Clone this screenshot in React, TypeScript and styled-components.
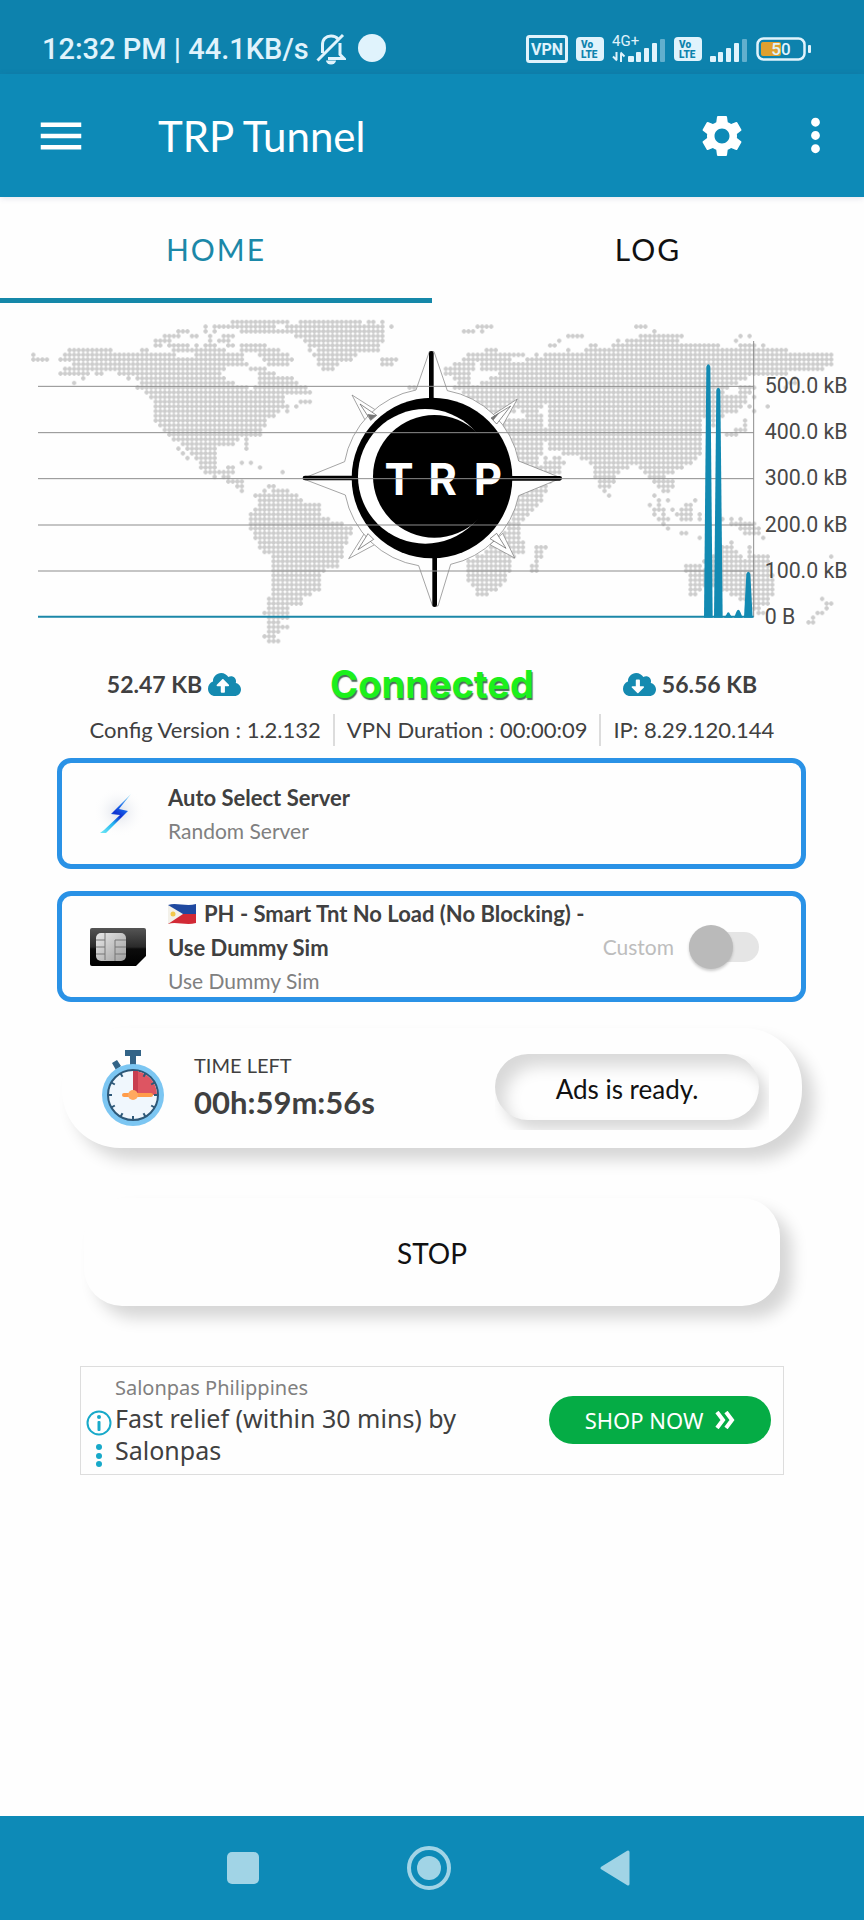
import React, { useState } from "react";
import styled, { createGlobalStyle } from "styled-components";
import { MdMenu, MdMoreVert, MdSettings } from "react-icons/md";
import { FaCloudDownloadAlt, FaCloudUploadAlt } from "react-icons/fa";

const BRAND = "#0d8ab7";
const INK = "#404040";

const GlobalStyle = createGlobalStyle`
  * { box-sizing: border-box; }
  body {
    margin: 0;
    background: #fefefe;
    color: ${INK};
    font-family: Lato, "Open Sans", sans-serif;
  }
  button { font: inherit; color: inherit; border: 0; background: none; padding: 0; margin: 0; cursor: pointer; }
  svg { display: block; flex: none; }
`;

const Screen = styled.div`
  min-height: 100vh;
  display: flex;
  flex-direction: column;
`;

/* ---------- status bar ---------- */

const StatusBar = styled.div`
  height: 74px;
  padding: 24px 52px 0 42px;
  display: flex;
  align-items: center;
  justify-content: space-between;
  background: #0d82ad;
  color: #e0f3fc;
  font-family: Roboto, sans-serif;
`;

const StatusGroup = styled.div<{ $gap: number }>`
  display: flex;
  align-items: center;
  gap: ${(p) => p.$gap}px;
`;

const Clock = styled.span`
  font-size: 29px;
  line-height: 32px;
  font-weight: 500;
  white-space: nowrap;
`;

const BellOffIcon = () => (
  <svg width="30" height="32" viewBox="0 0 30 32" fill="none" stroke="currentColor" strokeWidth="3">
    <path d="M6.500 20V12C6.500 6 10 3 15 3c3 0 5.500 1 7 3" />
    <path d="M24 10v11.500l4 4H12" />
    <path d="M1.500 27.500 27 2" />
    <path d="M10 27.500h10a5 4 0 0 1-10 0z" fill="currentColor" stroke="none" />
  </svg>
);

const VpnIcon = () => (
  <svg width="42" height="28" viewBox="0 0 42 28">
    <rect x="1.500" y="1.500" width="39" height="25" rx="2" fill="none" stroke="currentColor" strokeWidth="3" />
    <text x="21" y="20" textAnchor="middle" fontSize="16" fontWeight="700" fill="currentColor">VPN</text>
  </svg>
);

const VolteIcon = () => (
  <svg width="28" height="24" viewBox="0 0 28 24">
    <rect width="28" height="24" rx="4" fill="currentColor" />
    <text x="5" y="11" fontSize="10" fontWeight="900" fill="#0d82ad">Vo</text>
    <text x="5" y="21" fontSize="10" fontWeight="900" fill="#0d82ad">LTE</text>
  </svg>
);

const SignalBars = () => (
  <g fill="currentColor">
    <rect x="0" y="20" width="6" height="6" rx="1" />
    <rect x="8" y="16" width="5" height="10" rx="1" />
    <rect x="16" y="12" width="5" height="14" rx="1" />
    <rect x="24" y="7" width="5" height="19" rx="1" />
    <rect x="32" y="3" width="5" height="23" rx="1" opacity="0.400" />
  </g>
);

const MobileDataIcon = () => (
  <svg width="54" height="38" viewBox="0 -4 54 38">
    <text x="0" y="12" fontSize="15" fill="currentColor">4G+</text>
    <path d="M4.500 18v8M5 26.500 1 22.500M9 28v-8M8.500 18.500l4 4" stroke="currentColor" strokeWidth="2" fill="none" />
    <g transform="translate(16 2)"><SignalBars /></g>
  </svg>
);

const SignalIcon = () => (
  <svg width="38" height="26" viewBox="0 0 38 26"><SignalBars /></svg>
);

const BatteryIcon = () => (
  <svg width="56" height="24" viewBox="0 0 56 24">
    <rect x="1.500" y="1.500" width="47" height="21" rx="6" fill="none" stroke="currentColor" strokeWidth="2.500" />
    <rect x="5" y="5" width="20" height="14" rx="2" fill="#dfa02f" />
    <rect x="52" y="8" width="3" height="8" rx="1" fill="currentColor" />
    <text x="25" y="18" textAnchor="middle" fontSize="17" fontWeight="500" fill="currentColor">50</text>
  </svg>
);

/* ---------- app bar and tabs ---------- */

const AppBar = styled.header`
  height: 123px;
  padding: 0 22px 0 34px;
  display: flex;
  align-items: center;
  background: ${BRAND};
  color: #fff;
  box-shadow: 0 1px 6px rgba(60, 60, 120, 0.150);
`;

const Title = styled.h1`
  flex: 1;
  margin: 0 0 0 70px;
  font-size: 42px;
  line-height: 48px;
  font-weight: 400;
`;

const IconButton = styled.button`
  display: flex;
  & + & { margin-left: 42px; }
`;

const Tabs = styled.div`
  display: grid;
  grid-template-columns: 1fr 1fr;
`;

const Tab = styled.button<{ $active: boolean }>`
  && {
    height: 106px;
    padding-top: 3px;
    border-bottom: 5px solid ${(p) => (p.$active ? "#1588a9" : "transparent")};
    color: ${(p) => (p.$active ? "#1b88a8" : "#111")};
    font-size: 30px;
    line-height: 36px;
    letter-spacing: 2px;
  }
`;

/* ---------- traffic chart ---------- */

const Chart = styled.svg`
  width: 100%;
  height: auto;
  margin-top: 1px;
`;

/* Each row lists start/end pairs of land, from north to south. */
const WEST: number[][] = [
  [705, 745, 758, 868, 905, 950, 972, 1085, 1105, 1125, 1149, 1149],
  [622, 622, 650, 815, 868, 950, 972, 1150, 1175, 1175],
  [540, 560, 622, 622, 650, 650, 732, 790, 812, 1150],
  [488, 535, 570, 588, 637, 637, 677, 692, 893, 1150],
  [462, 508, 637, 637, 664, 680, 915, 1150],
  [462, 480, 502, 560, 583, 583, 623, 640, 690, 705, 732, 790, 930, 1140],
  [208, 330, 420, 440, 515, 570, 583, 600, 623, 665, 732, 760, 785, 840, 930, 930, 958, 1140],
  [100, 100, 190, 520, 583, 600, 623, 630, 650, 692, 718, 730, 785, 855, 945, 1070],
  [100, 145, 180, 710, 732, 732, 798, 870, 958, 1058, 1149, 1190],
  [217, 692, 718, 745, 812, 855, 958, 1015, 1149, 1177],
  [190, 665, 758, 800, 972, 1003],
  [180, 262, 290, 303, 355, 655, 785, 815],
  [249, 249, 383, 383, 407, 665, 785, 870],
  [222, 222, 420, 705, 785, 882],
  [407, 735, 771, 910, 1230, 1245],
  [434, 750, 771, 923],
  [448, 842],
  [462, 842, 905, 935],
  [462, 842, 855, 868, 893, 893],
  [462, 828, 855, 855],
  [462, 815],
  [462, 790],
  [475, 790],
  [488, 777],
  [502, 775],
  [515, 718, 745, 745],
  [543, 692, 745, 745],
  [530, 530, 557, 640, 745, 745],
  [543, 543, 570, 640],
  [557, 557, 583, 640],
  [597, 640, 732, 732, 758, 758],
  [597, 640, 690, 705, 785, 785],
  [610, 692, 852, 852],
  [650, 650, 677, 690],
  [690, 732],
  [718, 732, 812, 826],
  [732, 732, 798, 798, 826, 868],
  [771, 895],
  [785, 908],
  [785, 950],
  [771, 950],
  [758, 962],
  [758, 990],
  [758, 1030],
  [758, 1058],
  [771, 1058],
  [771, 1045],
  [785, 1045],
  [785, 1030],
  [798, 1030],
  [826, 1030],
  [826, 1017],
  [826, 1017],
  [826, 976],
  [826, 962],
  [826, 962],
  [826, 950],
  [826, 950],
  [826, 935],
  [812, 908],
  [812, 908],
  [812, 868],
  [798, 855],
  [812, 855],
  [812, 840],
  [812, 855],
  [812, 840],
  [798, 826],
  [812, 840],
];

const EAST: number[][] = [
  [],
  [133, 178, 617, 645],
  [92, 120, 147, 147, 672, 672],
  [415, 443, 630, 755, 926, 926, 953, 953],
  [375, 375, 563, 563, 590, 740, 912, 912],
  [348, 362, 470, 485, 548, 862, 930, 965, 993, 993],
  [160, 188, 402, 402, 457, 485, 510, 1060],
  [105, 270, 308, 308, 335, 1195],
  [92, 230, 280, 1195],
  [65, 120, 147, 228, 242, 1195],
  [38, 120, 147, 1170],
  [38, 110, 210, 1060],
  [65, 110, 172, 935, 1085, 1085],
  [80, 105, 145, 912, 1075, 1090],
  [65, 890, 926, 960, 1062, 1062],
  [92, 870, 926, 955],
  [105, 945, 965, 965],
  [130, 945],
  [150, 325, 348, 925, 953, 953, 1008, 1008],
  [160, 240, 275, 320, 355, 910, 965, 965],
  [170, 225, 290, 325, 355, 870],
  [205, 325, 355, 800, 845, 845, 940, 940],
  [205, 325, 355, 800, 845, 845, 940, 940],
  [205, 800, 912, 940],
  [205, 800, 885, 910],
  [220, 805],
  [235, 325, 348, 805],
  [240, 325, 348, 805],
  [250, 325, 390, 805],
  [260, 310, 335, 335, 362, 375, 455, 790],
  [260, 310, 335, 390, 470, 780],
  [265, 380, 497, 580, 630, 750],
  [265, 375, 497, 555, 645, 715],
  [265, 360, 497, 540, 655, 700],
  [250, 350, 510, 540, 672, 725],
  [250, 345, 510, 525, 685, 725],
  [250, 338, 520, 520, 700, 712],
  [250, 325, 535, 535, 672, 672],
  [250, 325, 685, 685, 712, 712, 790, 790],
  [250, 312, 658, 658, 685, 685, 765, 780],
  [250, 300, 672, 698, 725, 725, 750, 780],
  [250, 285, 672, 672, 698, 698, 738, 780, 805, 805],
  [240, 270, 685, 712, 750, 780, 805, 805, 873, 873, 900, 900, 926, 926],
  [235, 258, 698, 698, 900, 965],
  [235, 258, 712, 712, 926, 980],
  [225, 258, 752, 765, 940, 980],
  [220, 258, 805, 805, 993, 993],
  [205, 270, 900, 900],
  [180, 270, 320, 335, 873, 900, 953, 953],
  [160, 270, 308, 325, 873, 910, 953, 953],
  [130, 245, 308, 325, 845, 920, 953, 1008, 1195, 1195],
  [105, 230, 308, 320, 820, 1008],
  [105, 230, 295, 320, 765, 805, 835, 1008],
  [105, 230, 295, 308, 765, 1008],
  [105, 217, 780, 1022],
  [105, 217, 780, 1022],
  [120, 205, 780, 1022],
  [133, 190, 780, 805, 873, 1022],
  [133, 160, 780, 790, 900, 1022],
  [926, 1008, 1168, 1168],
  [965, 1008, 1180, 1195],
  [965, 980, 1180, 1180],
  [980, 993, 1155, 1168],
  [1140, 1140],
  [1127, 1140],
];

const COLUMN = 13.6;
const ROW = 14.08;

const landPath = (rows: number[][], offset: number) =>
  rows
    .map((spans, r) => {
      let d = "";
      for (let i = 0; i < spans.length; i += 2) {
        const from = Math.round((spans[i] + offset - 100) / COLUMN);
        const to = Math.round((spans[i + 1] + offset - 100) / COLUMN);
        d += `M${(100 + (from - 0.5) * COLUMN).toFixed(1)} ${(66 + (r - 0.5) * ROW).toFixed(1)}h${((to - from + 1) * COLUMN).toFixed(1)}v${ROW}H${(100 + (from - 0.5) * COLUMN).toFixed(1)}z`;
      }
      return d;
    })
    .join("");

const WorldMap = () => (
  <g>
    <defs>
      <pattern id="dots" x={100 - COLUMN / 2} y={66 - ROW / 2} width={COLUMN} height={ROW} patternUnits="userSpaceOnUse">
        <path d={`M0 ${ROW / 2}H${COLUMN}M${COLUMN / 2} 0V${ROW}`} stroke="#dadada" strokeWidth="5" />
        <circle cx={COLUMN / 2} cy={ROW / 2} r="6" fill="#cdcdcd" />
      </pattern>
    </defs>
    <path d={landPath(WEST, 0) + landPath(EAST, 1296)} fill="url(#dots)" />
  </g>
);

const CompassLogo = () => (
  <g>
    <g fill="#fefefe" stroke="#777" strokeWidth="2" strokeLinejoin="round">
      <path d="M1056 285 1096 362 1130 332z" />
      <path d="M1552 297 1470 350 1506 380z" />
      <path d="M1046 776 1092 702 1124 734z" />
      <path d="M1544 774 1470 734 1508 700z" />
      <path d="M1248 270 1288 155H1302L1342 272A266 266 0 0 1 1556 483L1684 534 1556 587A266 266 0 0 1 1352 793L1314 918H1298L1256 797A266 266 0 0 1 1036 585L908 536 1034 485A266 266 0 0 1 1248 270z" />
    </g>
    <g fill="#fff" stroke="#555" strokeWidth="2">
      <path d="M1080 312 1112 361 1130 346z" />
      <path d="M1532 318 1473 354 1490 372z" />
      <path d="M1074 749 1104 701 1121 718z" />
      <path d="M1518 745 1470 716 1490 700z" />
    </g>
    <g fill="#777">
      <path d="M1102 342 1112 361 1130 346z" />
      <path d="M1500 337 1473 354 1480 361z" />
    </g>
    <g stroke="#000" strokeWidth="14" strokeLinecap="round">
      <path d="M1294 160V300M1304 770V914M915 534H1060M1530 535H1679" />
    </g>
    <circle cx="1296" cy="534" r="241" />
    <circle cx="1276" cy="529" r="202" fill="#fff" />
    <circle cx="1303" cy="529" r="184" />
    <g fill="#fff" fontFamily="Inter, sans-serif" fontWeight="700" fontSize="131">
      <text x="1197" y="585" textAnchor="middle">T</text>
      <text x="1328" y="585" textAnchor="middle">R</text>
      <text x="1464" y="585" textAnchor="middle">P</text>
    </g>
  </g>
);

const AXIS = [
  { label: "500.0 kB", y: 259 },
  { label: "400.0 kB", y: 398 },
  { label: "300.0 kB", y: 536 },
  { label: "200.0 kB", y: 675 },
  { label: "100.0 kB", y: 813 },
  { label: "0 B", y: 951 },
];

const PEAKS = [
  { x: 2125, y: 192 },
  { x: 2155, y: 262 },
  { x: 2185, y: 936 },
  { x: 2215, y: 928 },
  { x: 2245, y: 814 },
];

const TrafficChart = () => (
  <Chart viewBox="0 12 2592 1038" role="img" aria-label="Network traffic">
    <WorldMap />
    <CompassLogo />
    <g stroke="#8c8c8c" strokeWidth="3">
      {AXIS.slice(0, 5).map((a) => (
        <path key={a.label} d={`M114 ${a.y}H2261`} />
      ))}
      <path d="M2261 123V951" />
    </g>
    <path d="M114 950H2261" stroke="#1b87a8" strokeWidth="6" />
    <g fill="#128ab2">
      {PEAKS.map((p) => (
        <path key={p.x} d={`M${p.x - 13} 953L${p.x - 6} ${p.y + 8}Q${p.x} ${p.y - 6} ${p.x + 6} ${p.y + 8}L${p.x + 13} 953z`} />
      ))}
    </g>
    <g fill="#484848" fontFamily="Roboto, sans-serif" fontSize="64">
      {AXIS.map((a) => (
        <text key={a.label} x="2294" y={a.y + 20}>{a.label}</text>
      ))}
    </g>
  </Chart>
);

/* ---------- connection summary ---------- */

const Summary = styled.div`
  height: 62px;
  padding: 6px 45px 0;
  display: grid;
  grid-template-columns: 1fr 1fr 1fr;
  align-items: center;
  justify-items: center;
`;

const Traffic = styled.div`
  display: flex;
  align-items: center;
  gap: 6px;
  font-size: 23px;
  line-height: 30px;
  font-weight: 700;
  svg { color: #158ab0; }
`;

const Connected = styled.strong`
  font-family: Inter, sans-serif;
  font-size: 38px;
  line-height: 44px;
  font-weight: 700;
  color: #1cf01c;
  text-shadow: 1px 2px 1px #4b6a58;
`;

const Details = styled.div`
  height: 36px;
  display: flex;
  align-items: center;
  justify-content: center;
  font-size: 22px;
  line-height: 32px;
  white-space: nowrap;
  span { padding: 0 12px; }
  span + span { border-left: 2px solid #dcdcdc; }
`;

/* ---------- server cards ---------- */

const Cards = styled.div`
  padding: 10px 58px 0 57px;
  display: flex;
  flex-direction: column;
  gap: 22px;
`;

const Card = styled.section`
  min-height: 111px;
  border: 5px solid #2a92e6;
  border-radius: 14px;
  display: flex;
  align-items: center;
  padding: 0 42px 0 28px;
`;

const CardSelect = styled.button`
  flex: 1;
  display: flex;
  align-items: center;
  gap: 22px;
  text-align: left;
`;

const ServerName = styled.span`
  display: block;
  font-size: 22px;
  line-height: 34px;
  font-weight: 700;
`;

const ServerNote = styled.span`
  display: block;
  font-size: 21px;
  line-height: 32px;
  color: #808080;
`;

const Flag = styled.svg`
  && { display: inline-block; }
  width: 28px;
  height: 22px;
  margin-right: 8px;
  vertical-align: -3px;
`;

const PhilippinesFlag = () => (
  <Flag viewBox="0 0 28 22" aria-label="Philippines">
    <path d="M0 2C8-1 18 4 28 1V11H0z" fill="#1f49a0" />
    <path d="M0 11H28V20C18 23 8 18 0 21z" fill="#d22a36" />
    <path d="M0 2 15 11 0 21z" fill="#f3f1ea" />
    <circle cx="5" cy="11" r="2.500" fill="#f2c84b" />
  </Flag>
);

const BoltIcon = () => (
  <svg width="56" height="56" viewBox="0 0 56 56">
    <defs>
      <radialGradient id="halo">
        <stop offset="0" stopColor="#dde1ea" />
        <stop offset="1" stopColor="#fefefe" stopOpacity="0" />
      </radialGradient>
      <linearGradient id="bolt" gradientUnits="userSpaceOnUse" x1="12" y1="48" x2="41" y2="8">
        <stop offset="0" stopColor="#6fe8f5" />
        <stop offset="0.300" stopColor="#23b4f0" />
        <stop offset="0.500" stopColor="#1030d0" />
        <stop offset="0.650" stopColor="#1560e8" />
        <stop offset="1" stopColor="#8fe6f5" />
      </linearGradient>
    </defs>
    <ellipse cx="29" cy="26" rx="26" ry="25" fill="url(#halo)" />
    <path d="M41 8 21 28l9 1L14 44l-4 3 6 0L38 25l-9-2z" fill="url(#bolt)" />
  </svg>
);

const SimIcon = () => (
  <svg width="56" height="38" viewBox="0 0 56 38">
    <defs>
      <linearGradient id="sim" x1="0" y1="0" x2="0" y2="1">
        <stop offset="0" stopColor="#555" />
        <stop offset="0.500" stopColor="#2a2a2a" />
        <stop offset="0.550" stopColor="#0c0c0c" />
        <stop offset="1" stopColor="#000" />
      </linearGradient>
      <linearGradient id="chip" x1="0" y1="0" x2="1" y2="1">
        <stop offset="0" stopColor="#e8e8e8" />
        <stop offset="1" stopColor="#a0a0a0" />
      </linearGradient>
    </defs>
    <path d="M2 0H54a2 2 0 0 1 2 2V28L46 38H2a2 2 0 0 1-2-2V2a2 2 0 0 1 2-2z" fill="url(#sim)" />
    <rect x="6" y="5" width="30" height="28" rx="5" fill="url(#chip)" />
    <path d="M6 12h9v20M6 19h9M6 26h9M15 12V5M25 33V12h11M25 19h11M25 26h11" fill="none" stroke="#777" />
  </svg>
);

const SwitchLabel = styled.label`
  display: flex;
  align-items: center;
  gap: 15px;
  font-size: 21px;
  line-height: 30px;
  color: #bdbdbd;
`;

const Switch = styled.input`
  appearance: none;
  width: 70px;
  height: 30px;
  margin: 0;
  display: flex;
  align-items: center;
  background: #e5e5e5;
  border-radius: 15px;
  &::before {
    content: "";
    flex: none;
    width: 44px;
    height: 44px;
    border-radius: 50%;
    background: #bababa;
    box-shadow: 0 2px 3px rgba(0, 0, 0, 0.200);
  }
  &:checked::before { margin-left: auto; background: ${BRAND}; }
`;

/* ---------- time left and stop ---------- */

const TimerPanel = styled.section`
  min-height: 120px;
  margin: 26px 62px 0;
  padding: 0 33px 0 40px;
  display: flex;
  align-items: center;
  border-radius: 58px;
  background: #fefefe;
  box-shadow: 12px 12px 16px rgba(0, 0, 0, 0.160);
`;

const TimeText = styled.div`
  flex: 1;
  padding: 0 0 6px 30px;
`;

const TimeLabel = styled.div`
  font-size: 20px;
  line-height: 34px;
`;

const TimeValue = styled.div`
  font-size: 31px;
  line-height: 40px;
  font-weight: 700;
`;

const AdsSlot = styled.div`
  align-self: flex-start;
  margin-top: 26px;
  padding: 0 10px 10px 0;
  overflow: hidden;
`;

const AdsButton = styled.button`
  && {
    width: 264px;
    height: 66px;
    padding-top: 3px;
    border-radius: 33px;
    background: #fefefe;
    color: #111;
    font-size: 26px;
    line-height: 32px;
    box-shadow: 8px 10px 14px rgba(0, 0, 0, 0.150), inset 10px 12px 16px rgba(0, 0, 0, 0.150);
  }
`;

const StopButton = styled.button`
  && {
    height: 108px;
    margin: 50px 84px 0;
    padding-top: 2px;
    border-radius: 38px;
    background: #fefefe;
    color: #111;
    font-size: 28px;
    line-height: 36px;
    box-shadow: 12px 12px 16px rgba(0, 0, 0, 0.160);
  }
`;

const StopwatchIcon = () => (
  <svg width="62" height="78" viewBox="0 0 62 78">
    <path d="M23 1h16v6h-5v11h-6V7h-5zM10 14l5-3 4 6-5 4z" fill="#336487" />
    <circle cx="31" cy="46" r="31" fill="#7cc6f2" />
    <circle cx="31" cy="46" r="25" fill="#f0f7fd" stroke="#2d5878" strokeWidth="2" />
    <path d="M31 46V22a24 24 0 0 1 24 24z" fill="#dd5562" />
    <path d="M31 46V22h5v24z" fill="#c83e50" />
    <g stroke="#2d5878" strokeWidth="2">
      {[30, 60, 90, 120, 150, 180, 210, 240, 270, 300, 330].map((a) => (
        <path key={a} d="M31 21v4" transform={`rotate(${a} 31 46)`} />
      ))}
    </g>
    <rect x="20" y="44" width="31" height="4" rx="2" fill="#ff9c4a" />
    <circle cx="31" cy="46" r="5" fill="#ffa95f" />
  </svg>
);

/* ---------- advert ---------- */

const Advert = styled.aside`
  min-height: 109px;
  margin: 60px 80px 0;
  padding: 0 12px 2px 5px;
  display: flex;
  align-items: center;
  border: 1px solid #ddd;
  font-family: "Noto Sans", sans-serif;
`;

const AdMarks = styled.div`
  width: 29px;
  padding-top: 36px;
`;

const AdText = styled.div`
  flex: 1;
  font-size: 25px;
  line-height: 32px;
`;

const AdSponsor = styled.div`
  font-size: 20px;
  line-height: 28px;
  color: #808080;
`;

const AdCopy = styled.div`
  max-width: 390px;
`;

const ShopLink = styled.a`
  width: 222px;
  height: 48px;
  border-radius: 24px;
  display: flex;
  align-items: center;
  justify-content: center;
  gap: 12px;
  background: #05ac45;
  color: #fff;
  font-size: 22px;
  line-height: 28px;
  text-decoration: none;
`;

/* ---------- navigation bar ---------- */

const NavBar = styled.nav`
  height: 104px;
  margin-top: auto;
  padding-right: 6px;
  display: flex;
  align-items: center;
  justify-content: center;
  gap: 138px;
  background: ${BRAND};
  color: #a1d4e6;
`;

const NavButton = styled.button`
  && {
    width: 48px;
    height: 48px;
    color: inherit;
  }
`;

export default function App() {
  const [tab, setTab] = useState("HOME");
  return (
    <Screen>
      <GlobalStyle />
      <StatusBar>
        <StatusGroup $gap={7}>
          <Clock>12:32 PM | 44.1KB/s</Clock>
          <BellOffIcon />
          <svg width="34" height="30" viewBox="0 0 34 30">
            <circle cx="19" cy="14" r="14" fill="currentColor" />
          </svg>
        </StatusGroup>
        <StatusGroup $gap={8}>
          <VpnIcon />
          <VolteIcon />
          <MobileDataIcon />
          <VolteIcon />
          <SignalIcon />
          <BatteryIcon />
        </StatusGroup>
      </StatusBar>

      <AppBar>
        <IconButton aria-label="Menu"><MdMenu size={54} /></IconButton>
        <Title>TRP Tunnel</Title>
        <IconButton aria-label="Settings"><MdSettings size={50} /></IconButton>
        <IconButton aria-label="More options"><MdMoreVert size={53} /></IconButton>
      </AppBar>

      <Tabs role="tablist">
        {["HOME", "LOG"].map((name) => (
          <Tab key={name} role="tab" aria-selected={tab === name} $active={tab === name} onClick={() => setTab(name)}>
            {name}
          </Tab>
        ))}
      </Tabs>

      <TrafficChart />

      <Summary>
        <Traffic>52.47 KB <FaCloudUploadAlt size={33} /></Traffic>
        <Connected>Connected</Connected>
        <Traffic><FaCloudDownloadAlt size={33} /> 56.56 KB</Traffic>
      </Summary>
      <Details>
        <span>Config Version : 1.2.132</span>
        <span>VPN Duration : 00:00:09</span>
        <span>IP: 8.29.120.144</span>
      </Details>

      <Cards>
        <Card>
          <CardSelect>
            <BoltIcon />
            <span>
              <ServerName>Auto Select Server</ServerName>
              <ServerNote>Random Server</ServerNote>
            </span>
          </CardSelect>
        </Card>
        <Card>
          <CardSelect>
            <SimIcon />
            <span>
              <ServerName><PhilippinesFlag />PH - Smart Tnt No Load (No Blocking) - Use Dummy Sim</ServerName>
              <ServerNote>Use Dummy Sim</ServerNote>
            </span>
          </CardSelect>
          <SwitchLabel>
            Custom
            <Switch type="checkbox" role="switch" />
          </SwitchLabel>
        </Card>
      </Cards>

      <TimerPanel>
        <StopwatchIcon />
        <TimeText>
          <TimeLabel>TIME LEFT</TimeLabel>
          <TimeValue>00h:59m:56s</TimeValue>
        </TimeText>
        <AdsSlot><AdsButton>Ads is ready.</AdsButton></AdsSlot>
      </TimerPanel>

      <StopButton>STOP</StopButton>

      <Advert>
        <AdMarks>
          <svg width="26" height="58" viewBox="0 0 26 58" fill="#17a9c9">
            <circle cx="13" cy="14" r="11.500" fill="none" stroke="#17a9c9" strokeWidth="2" />
            <circle cx="13" cy="8" r="2" />
            <rect x="11.500" y="12" width="3" height="10" rx="1" />
            <circle cx="13" cy="38" r="3" />
            <circle cx="13" cy="47" r="3" />
            <circle cx="13" cy="55" r="3" />
          </svg>
        </AdMarks>
        <AdText>
          <AdSponsor>Salonpas Philippines</AdSponsor>
          <AdCopy>Fast relief (within 30 mins) by Salonpas</AdCopy>
        </AdText>
        <ShopLink href="#shop">
          SHOP NOW
          <svg width="20" height="18" viewBox="0 0 20 18" fill="none" stroke="currentColor" strokeWidth="4">
            <path d="M2 1l6 8-6 8M11 1l6 8-6 8" />
          </svg>
        </ShopLink>
      </Advert>

      <NavBar>
        <NavButton aria-label="Recent apps">
          <svg width="48" height="48" viewBox="0 0 48 48"><rect x="8" y="8" width="32" height="32" rx="5" fill="currentColor" /></svg>
        </NavButton>
        <NavButton aria-label="Home">
          <svg width="48" height="48" viewBox="0 0 48 48">
            <circle cx="24" cy="24" r="20" fill="none" stroke="currentColor" strokeWidth="4" />
            <circle cx="24" cy="24" r="12" fill="currentColor" />
          </svg>
        </NavButton>
        <NavButton aria-label="Back">
          <svg width="48" height="48" viewBox="0 0 48 48">
            <path d="M11 24 37 8V40z" fill="currentColor" stroke="currentColor" strokeWidth="3" strokeLinejoin="round" />
          </svg>
        </NavButton>
      </NavBar>
    </Screen>
  );
}
